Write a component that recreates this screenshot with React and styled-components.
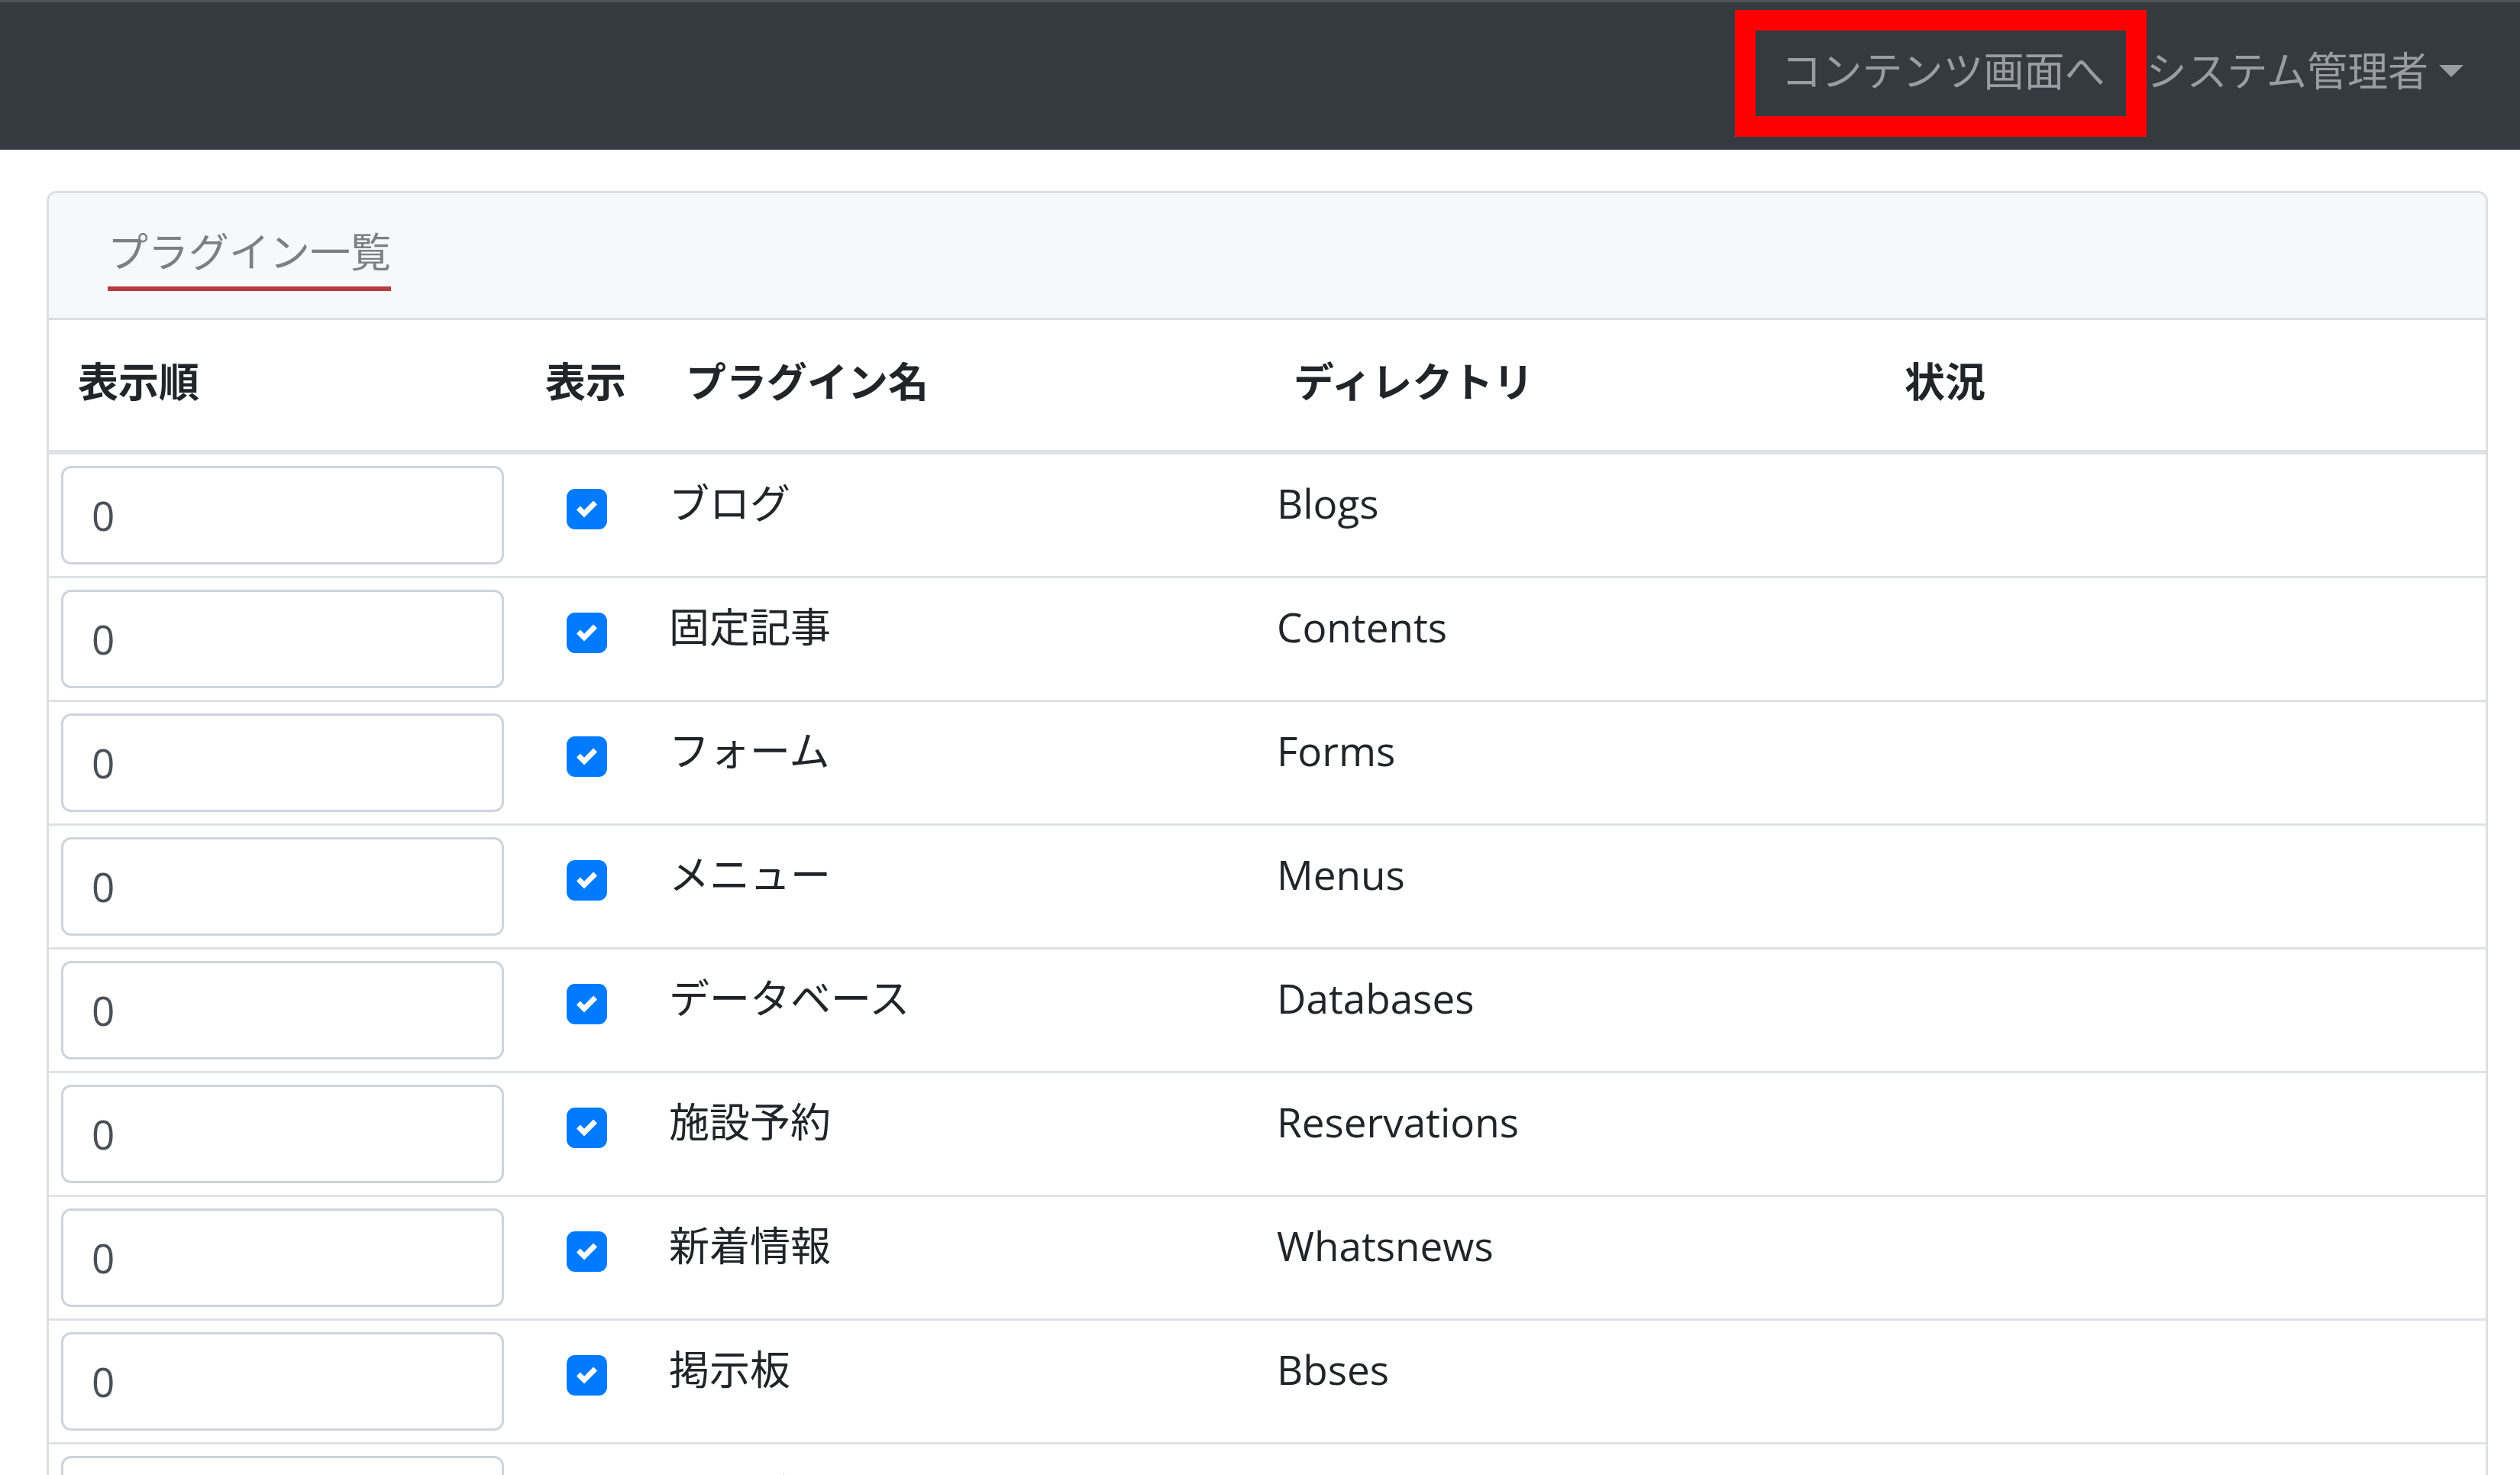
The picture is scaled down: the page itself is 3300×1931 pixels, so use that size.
import React from 'react'
import styled, { createGlobalStyle } from 'styled-components'

const GlobalStyle = createGlobalStyle`
  html, body {
    margin: 0;
    padding: 0;
    background: #fff;
    overflow: hidden;
  }
  body {
    font-family: 'Open Sans', 'Noto Sans CJK JP', sans-serif;
    font-size: 53px;
    line-height: 80px;
    color: #212529;
  }
  * {
    box-sizing: border-box;
  }
`

const COLUMNS = '612px 184px 796px 800px 1fr'

const plugins = [
  { name: 'ブログ', dir: 'Blogs' },
  { name: '固定記事', dir: 'Contents' },
  { name: 'フォーム', dir: 'Forms' },
  { name: 'メニュー', dir: 'Menus' },
  { name: 'データベース', dir: 'Databases' },
  { name: '施設予約', dir: 'Reservations' },
  { name: '新着情報', dir: 'Whatsnews' },
  { name: '掲示板', dir: 'Bbses' },
  { name: 'キャビネット', dir: 'Cabinets' },
]

const Navbar = styled.nav`
  display: flex;
  justify-content: flex-end;
  align-items: flex-start;
  height: 196px;
  padding: 50px 48px 0 0;
  background: #343a40;
  border-top: 3px solid #4f545a;
`

const NavLink = styled.a`
  position: relative;
  display: block;
  padding: 0 26px 0 28px;
  color: #9a9da0;
  text-decoration: none;
  white-space: nowrap;

  ${({ $marked }) =>
    $marked &&
    `
    &::after {
      content: '';
      position: absolute;
      left: -33px;
      right: -28px;
      top: -40px;
      bottom: -46px;
      border: 27px solid #ff0000;
    }
  `}
`

const Caret = styled.span`
  display: inline-block;
  margin-left: 14px;
  vertical-align: 12px;
  border-top: 16px solid #9a9da0;
  border-left: 16px solid transparent;
  border-right: 16px solid transparent;
`

const Main = styled.main`
  padding: 54px 42px 0 61px;
`

const Card = styled.section`
  border: 3px solid #dfdfdf;
  border-radius: 13px;
  overflow: hidden;
`

const CardHeader = styled.div`
  display: flex;
  padding: 37px 0 35px 77px;
  background: #f7f8fa;
  border-bottom: 3px solid #dcdddf;
`

const Tab = styled.span`
  color: #7b8085;
  padding-bottom: 5px;
  border-bottom: 6px solid #b83b3e;
`

const Row = styled.div`
  display: grid;
  grid-template-columns: ${COLUMNS};
  border-bottom: ${({ $head }) => ($head ? '6px' : '3px')} solid #dee2e6;
`

const HeadCell = styled.div`
  padding: 41px 40px 49px 38px;
  font-weight: 700;
  white-space: nowrap;
`

const Cell = styled.div`
  display: flex;
  justify-content: ${({ $center }) => ($center ? 'center' : 'flex-start')};
  align-items: flex-start;
  padding: ${({ $text }) => ($text ? '24px' : '15px')} 16px 15px;
  white-space: nowrap;
`

const OrderInput = styled.input`
  width: 100%;
  height: 129px;
  padding: 0 37px;
  border: 3px solid #ced4da;
  border-radius: 13px;
  font: inherit;
  color: #495057;
  background: #fff;
  outline: none;
`

const CheckBox = styled.span`
  display: flex;
  align-items: center;
  justify-content: center;
  width: 53px;
  height: 53px;
  margin-top: 30px;
  border-radius: 11px;
  background: #007bff;
`

const Check = () => (
  <svg width="27" height="27" viewBox="0 0 8 8">
    <path
      fill="#fff"
      d="M6.564.75l-3.59 3.612-1.538-1.55L0 4.26 2.974 7.25 8 2.193z"
    />
  </svg>
)

const App = () => (
  <>
    <GlobalStyle />
    <Navbar>
      <NavLink href="#" $marked>
        コンテンツ画面へ
      </NavLink>
      <NavLink href="#">
        システム管理者
        <Caret />
      </NavLink>
    </Navbar>
    <Main>
      <Card>
        <CardHeader>
          <Tab>プラグイン一覧</Tab>
        </CardHeader>
        <Row $head>
          <HeadCell>表示順</HeadCell>
          <HeadCell>表示</HeadCell>
          <HeadCell>プラグイン名</HeadCell>
          <HeadCell>ディレクトリ</HeadCell>
          <HeadCell>状況</HeadCell>
        </Row>
        {plugins.map(p => (
          <Row key={p.dir}>
            <Cell>
              <OrderInput type="text" defaultValue="0" />
            </Cell>
            <Cell $center>
              <CheckBox>
                <Check />
              </CheckBox>
            </Cell>
            <Cell $text>{p.name}</Cell>
            <Cell $text>{p.dir}</Cell>
            <Cell />
          </Row>
        ))}
      </Card>
    </Main>
  </>
)

export default App
